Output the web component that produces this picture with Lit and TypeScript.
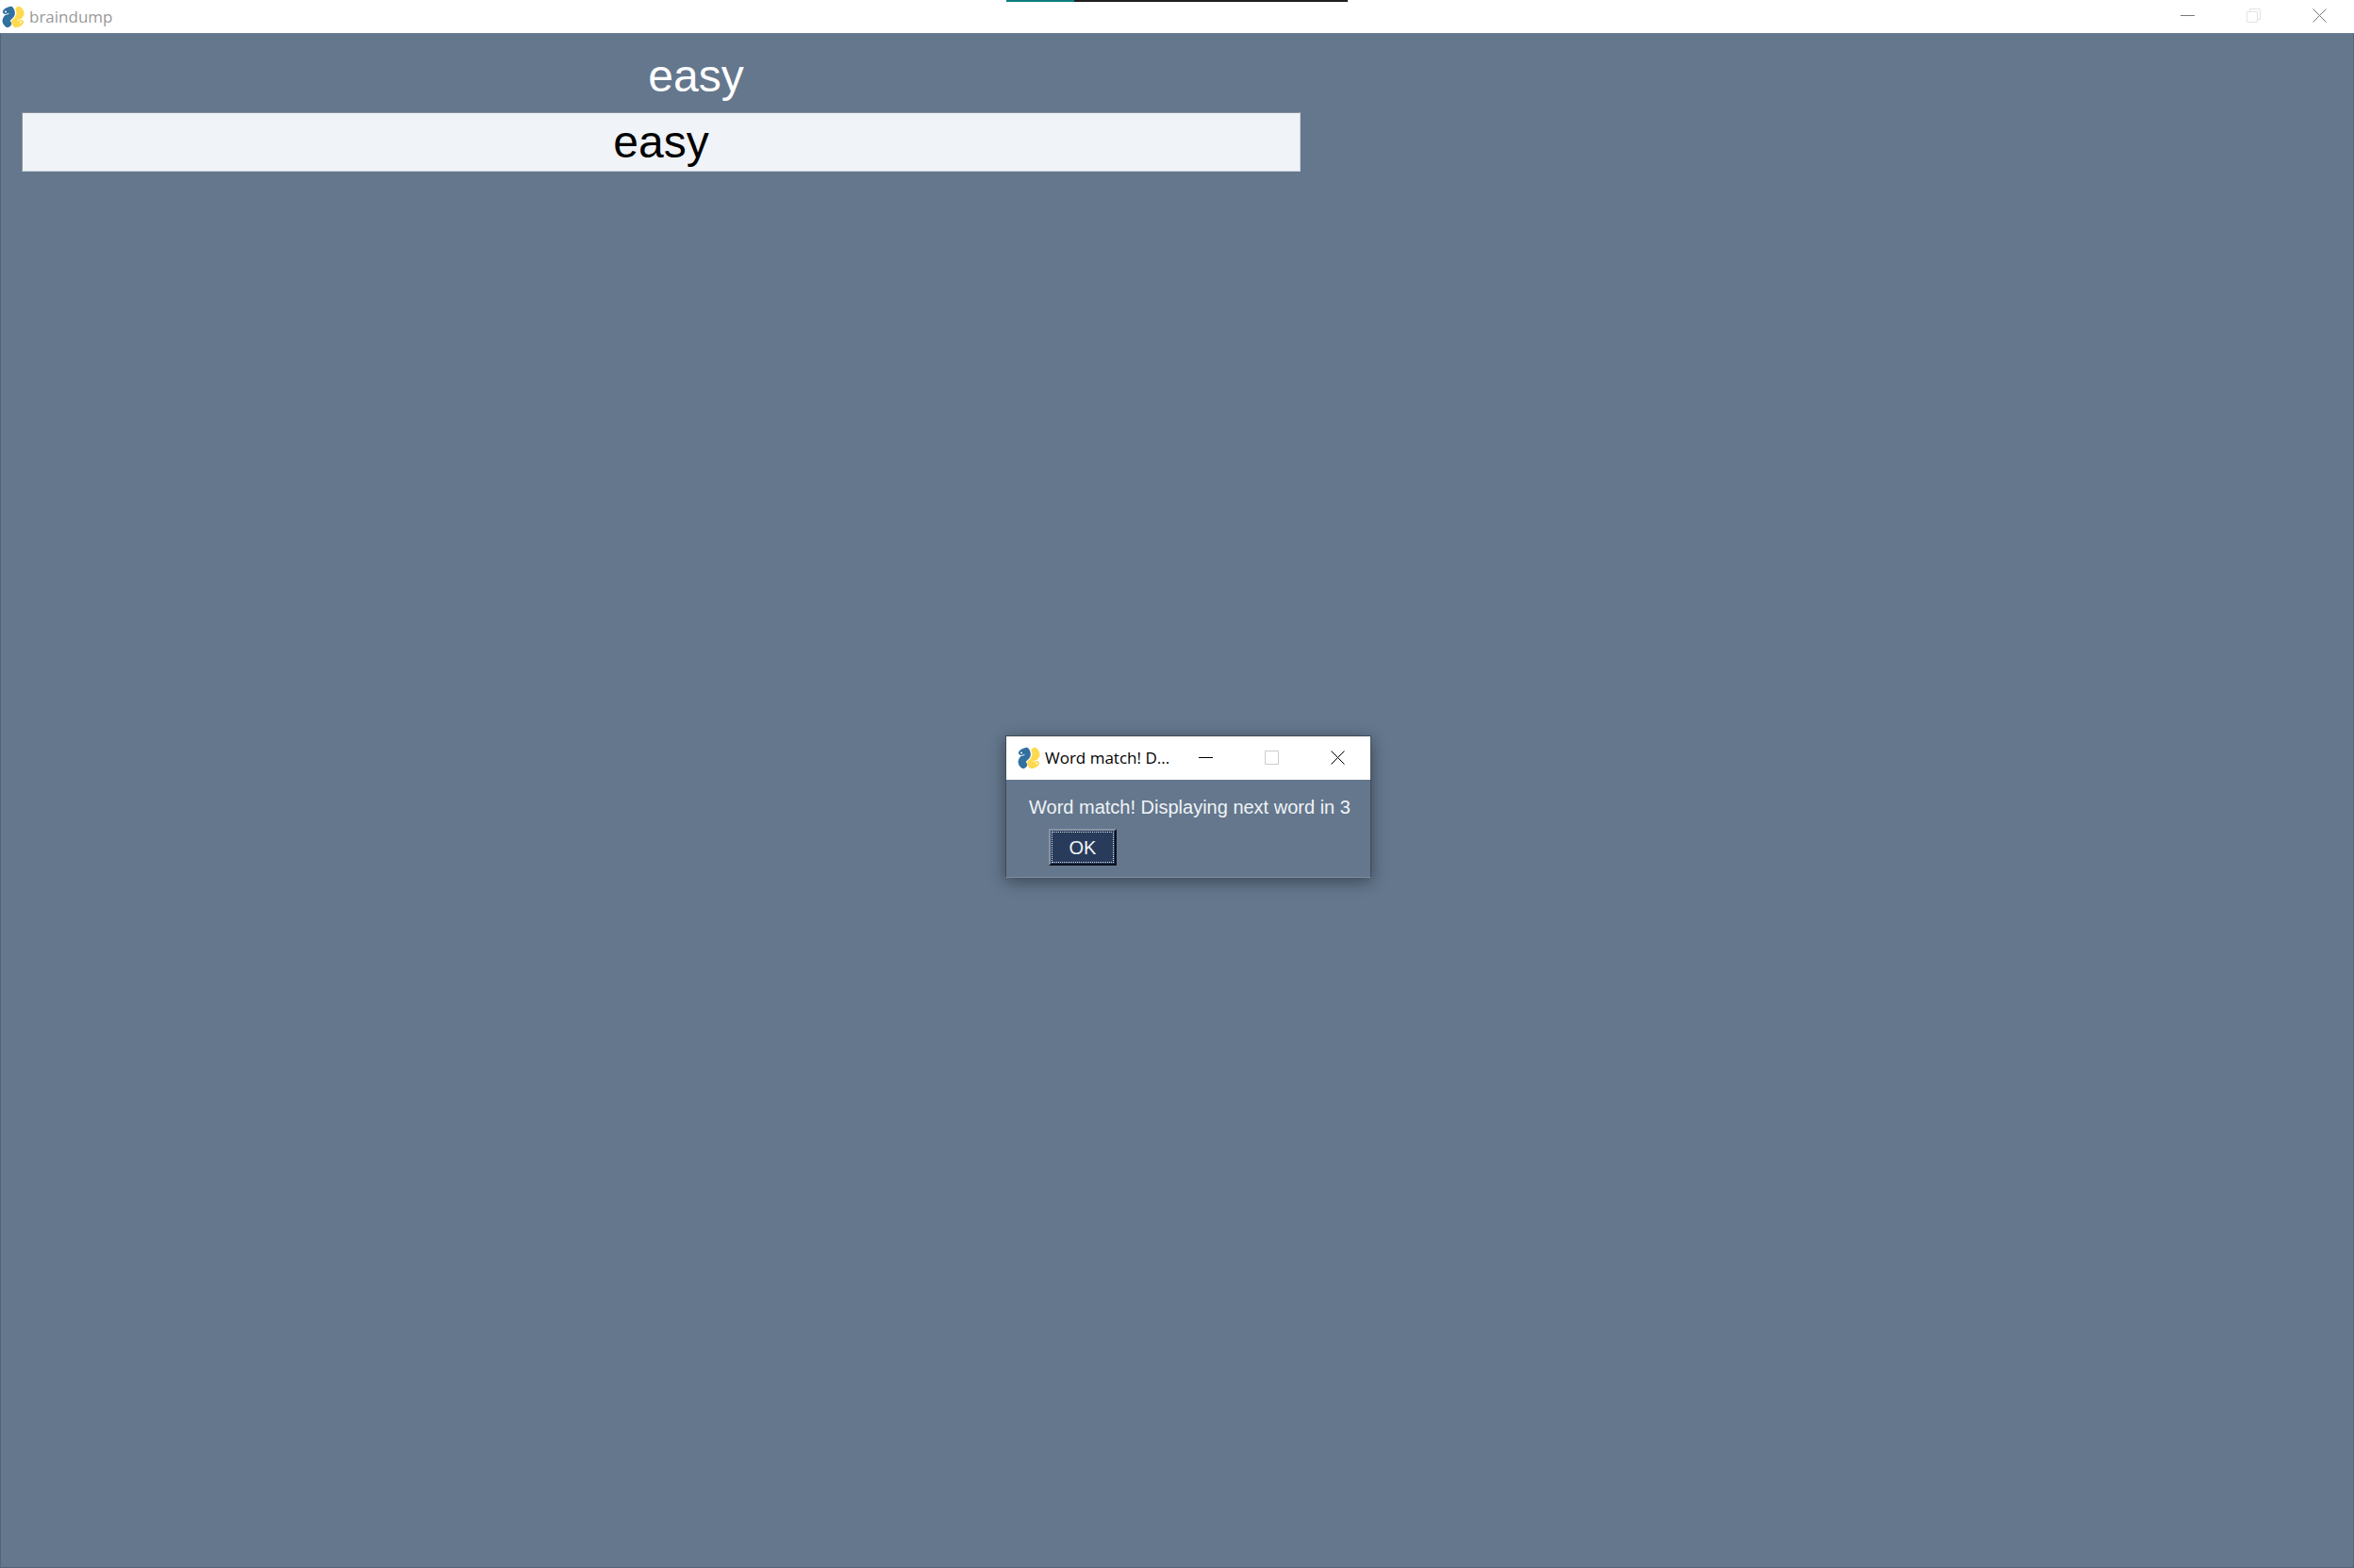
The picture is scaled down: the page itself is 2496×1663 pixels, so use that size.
import { LitElement, html, css, svg } from "lit";
import { customElement, property } from "lit/decorators.js";

@customElement("snake-logo")
class SnakeLogo extends LitElement {
  static styles = css`
    :host { display: block; flex: none; width: 24px; height: 24px; }
    svg { display: block; width: 100%; height: 100%; }
    .halo { fill: none; stroke: #fff; stroke-width: 10; }
    .body { fill: none; stroke-width: 8; stroke-linecap: round; stroke-linejoin: round; }
    .blue { stroke: #31709f; }
    .yellow { stroke: #ffd94f; }
    .mark { fill: none; stroke: #fff; stroke-width: 1; stroke-linecap: round; }
    .eye { fill: #fff; }
  `;
  render() {
    return html`<svg viewBox="0 0 24 24" aria-hidden="true">
      <path class="body yellow" d="M18 5C21 8 19.500 10 16 13 13.500 15.500 13.500 17 15 19" />
      <path class="yellow" d="M20.500 17.500Q18.500 20.500 15 20" fill="none" stroke-width="5" stroke-linecap="round" />
      <path class="halo" d="M9 5C11.500 8 10 9.500 8 11 3.500 15 4 17 6 19.500" />
      <path class="body blue" d="M9 5C10.500 8 10.500 9 8 11 3.500 15 4 17 6 19" />
      <path class="blue" d="M3.500 6.500Q5.500 3.500 9 4" fill="none" stroke-width="5" stroke-linecap="round" />
      <path class="mark" d="M1.500 9.500C3.500 10.500 5 9 7 8.500" />
      <path class="mark" d="M22.500 14.500C20.500 13.500 19 15 17 15.500" />
      <circle class="eye" cx="4" cy="6.500" r="1" />
      <circle class="eye" cx="20" cy="17.500" r="1" />
    </svg>`;
  }
}

const glyphs = {
  minimize: svg`<path d="M0 7.500H15" />`,
  maximize: svg`<path d="M.5 .5H14.500V14.500H.5Z" />`,
  restore: svg`<path d="M.5 3.500H11.500V14.500H.5ZM3.500 3V.5H14.500V11.500H12" />`,
  close: svg`<path d="M.5 .5 14.500 14.500M14.500 .5 .5 14.500" />`,
};

@customElement("title-bar")
class TitleBar extends LitElement {
  @property() label = "";
  @property({ type: Boolean }) maximized = false;

  static styles = css`
    :host {
      display: flex;
      align-items: center;
      justify-content: space-between;
      background: #fff;
      color: var(--title-color, #000);
      font: 17px/24px "Open Sans", "Noto Sans", sans-serif;
    }
    .caption { display: flex; align-items: center; gap: 5px; min-width: 0; }
    .label { white-space: nowrap; }
    .controls { display: flex; height: 100%; }
    .control {
      display: grid;
      place-items: center;
      width: 70px;
      height: 100%;
      padding: 0 0 2px;
      border: 0;
      background: none;
      color: inherit;
    }
    .control:disabled { color: var(--disabled-color, #ccc); }
    .glyph { width: 15px; height: 15px; fill: none; stroke: var(--glyph-color, currentColor); stroke-width: 1; }
    .control:disabled .glyph { stroke: currentColor; }
  `;

  render() {
    return html`
      <div class="caption">
        <snake-logo></snake-logo>
        <span class="label">${this.label}</span>
      </div>
      <div class="controls">
        <button class="control" aria-label="Minimize"><svg class="glyph">${glyphs.minimize}</svg></button>
        <button class="control" aria-label="Maximize" disabled>
          <svg class="glyph">${this.maximized ? glyphs.restore : glyphs.maximize}</svg>
        </button>
        <button class="control" aria-label="Close"><svg class="glyph">${glyphs.close}</svg></button>
      </div>
    `;
  }
}

@customElement("app-root")
class AppRoot extends LitElement {
  static styles = css`
    :host {
      display: flex;
      flex-direction: column;
      position: relative;
      min-height: 100vh;
      background: #64778d;
      font-family: "Liberation Sans", Arial, sans-serif;
    }
    * { box-sizing: border-box; }
    .main-bar {
      height: 35px;
      padding: 0 2px;
      --title-color: #999;
      --glyph-color: #777;
      --disabled-color: #e3e3e3;
    }
    .strip {
      position: absolute;
      top: 0;
      left: calc(50% - 181px);
      width: 362px;
      height: 2px;
      background: linear-gradient(to right, #0f7f80 72px, #1f1f1f 72px);
    }
    .content {
      flex: 1;
      display: grid;
      grid-template-columns: 1356fr 74fr 1020fr;
      align-content: start;
      row-gap: 6px;
      padding: 14px 22px;
      border: 1px solid #50647c;
      border-top-color: #6f7f92;
    }
    .word, .entry { height: 63px; margin: 0; font: 48px/62px "Liberation Sans", Arial, sans-serif; text-align: center; }
    .word { grid-column: 1 / 3; color: #fff; }
    .entry {
      grid-column: 1;
      width: 100%;
      padding: 0;
      border: 1px solid;
      border-color: #8a919b #c9d3de #c9d3de #8a919b;
      border-radius: 0;
      outline: none;
      background: #f0f3f7;
      color: #000;
    }
    .dialog {
      position: absolute;
      top: 780px;
      left: calc(50% - 182px);
      width: 388px;
      border: 1px solid #3f4b59;
      border-bottom-color: #7d8c9e;
      background: #64778d;
      box-shadow: 0 4px 16px rgba(0, 0, 0, 0.4);
    }
    .dialog-bar { height: 46px; padding-left: 12px; }
    .dialog-body { padding: 16px 24px 12px; }
    .message { margin: 0; font-size: 20px; line-height: 26px; color: #f0f3f7; white-space: nowrap; }
    .ok {
      display: block;
      width: 72px;
      height: 39px;
      margin: 10px 0 0 21px;
      padding: 0;
      border: 2px solid;
      border-color: #8a94a3 #0b1220 #0b1220 #8a94a3;
      border-radius: 0;
      outline: 1px dotted #dfe4ea;
      outline-offset: -4px;
      background: #283b5b;
      color: #f0f3f7;
      font: 20px/26px "Liberation Sans", Arial, sans-serif;
    }
  `;

  render() {
    return html`
      <title-bar class="main-bar" label="braindump" maximized></title-bar>
      <div class="strip"></div>
      <main class="content">
        <label class="word" for="entry">easy</label>
        <input class="entry" id="entry" type="text" .value=${"easy"} />
      </main>
      <section class="dialog" role="dialog" aria-labelledby="message">
        <title-bar class="dialog-bar" label="Word match! D..."></title-bar>
        <div class="dialog-body">
          <p class="message" id="message">Word match! Displaying next word in 3</p>
          <button class="ok">OK</button>
        </div>
      </section>
    `;
  }
}
